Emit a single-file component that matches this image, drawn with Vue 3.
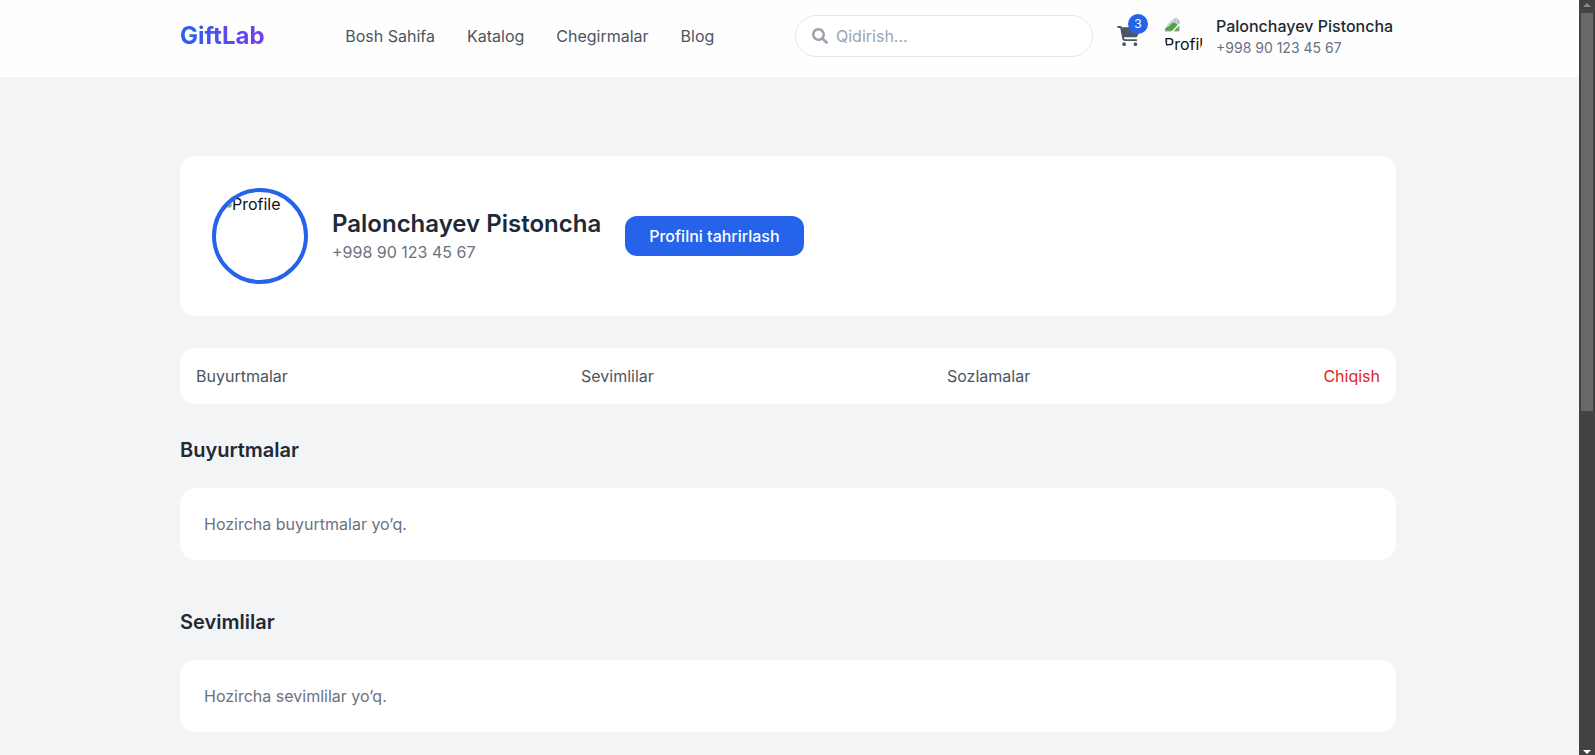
<script setup>
import { ref } from 'vue'

const query = ref('')
const user = { name: 'Palonchayev Pistoncha', phone: '+998 90 123 45 67' }
const menu = ['Bosh Sahifa', 'Katalog', 'Chegirmalar', 'Blog']
const tabs = ['Buyurtmalar', 'Sevimlilar', 'Sozlamalar']
const sections = [
  { title: 'Buyurtmalar', empty: 'Hozircha buyurtmalar yo’q.' },
  { title: 'Sevimlilar', empty: 'Hozircha sevimlilar yo’q.' },
]
</script>

<template>
  <div class="shell">
    <div class="page">
      <header class="header">
        <div class="container bar">
          <a class="logo" href="#">GiftLab</a>
          <nav class="menu">
            <a v-for="item in menu" :key="item" href="#">{{ item }}</a>
          </nav>
          <div class="tools">
            <label class="search">
              <svg class="search-icon" viewBox="0 0 512 512" aria-hidden="true">
                <path d="M505 442.7L405.3 343c-4.500-4.500-10.600-7-17-7H372c27.600-35.300 44-79.700 44-128C416 93.100 322.900 0 208 0S0 93.100 0 208s93.100 208 208 208c48.300 0 92.700-16.400 128-44v16.300c0 6.400 2.500 12.500 7 17l99.700 99.700c9.400 9.400 24.600 9.400 33.900 0l28.300-28.300c9.400-9.400 9.400-24.600.1-34zM208 336c-70.700 0-128-57.200-128-128 0-70.700 57.200-128 128-128 70.700 0 128 57.200 128 128 0 70.700-57.200 128-128 128z" />
              </svg>
              <input v-model="query" type="text" placeholder="Qidirish..." aria-label="Qidirish" />
            </label>
            <a class="cart" href="#" aria-label="Savat">
              <svg viewBox="0 0 576 512" aria-hidden="true">
                <path d="M0 24C0 10.7 10.7 0 24 0H69.5c22 0 41.5 12.8 50.6 32h411c26.3 0 45.5 25 38.6 50.4l-41 152.3c-8.5 31.4-37 53.3-69.5 53.3H170.7l5.4 28.5c2.2 11.3 12.1 19.5 23.600 19.500H488c13.3 0 24 10.7 24 24s-10.7 24-24 24H199.700c-34.600 0-64.300-24.600-70.700-58.500L77.400 54.500c-.7-3.800-4-6.500-7.900-6.500H24C10.700 48 0 37.300 0 24zM128 464a48 48 0 1 1 96 0 48 48 0 1 1 -96 0zm336-48a48 48 0 1 1 0 96 48 48 0 1 1 0-96z" />
              </svg>
              <span class="badge">3</span>
            </a>
            <a class="account" href="#">
              <span class="thumb">
                <svg class="missing" viewBox="0 0 16 16" aria-hidden="true">
                  <path d="M1 1h10l4 4v10H1z" fill="#c3d4f5" />
                  <path d="M1 15v-3q4-1 6-4t6 0v2l-5 5z" fill="#50a936" />
                  <path d="M8 15l7-7v2l-5 5z" fill="#fff" />
                  <path d="M10 15l5-5v5z" fill="#50a936" />
                  <path d="M11 1v4h4z" fill="#fff" />
                  <path d="M1 15V1h10l4 4v3M11 1v4h4M1 15h6M10 15h5v-5" fill="none" stroke="#a3a3a3" />
                </svg>
                <span>Profile</span>
              </span>
              <span class="who">
                <span class="who-name">{{ user.name }}</span>
                <span class="who-phone">{{ user.phone }}</span>
              </span>
            </a>
          </div>
        </div>
      </header>

      <main class="container content">
        <section class="card profile">
          <div class="avatar">
            <svg class="missing" viewBox="0 0 16 16" aria-hidden="true">
              <path d="M1 1h10l4 4v10H1z" fill="#c3d4f5" />
              <path d="M1 15v-3q5-5 9-2l5 1v4z" fill="#50a936" />
              <path d="M1 1h10l4 4v10H1z" fill="none" stroke="#9a9a9a" />
            </svg>
            <span>Profile</span>
          </div>
          <div>
            <h1>{{ user.name }}</h1>
            <p class="phone">{{ user.phone }}</p>
          </div>
          <button class="edit" type="button">Profilni tahrirlash</button>
        </section>

        <nav class="card tabs">
          <a v-for="tab in tabs" :key="tab" href="#">{{ tab }}</a>
          <a class="logout" href="#">Chiqish</a>
        </nav>

        <section v-for="s in sections" :key="s.title" class="block">
          <h2>{{ s.title }}</h2>
          <div class="card empty"><p>{{ s.empty }}</p></div>
        </section>
      </main>
    </div>

    <div class="scrollbar" aria-hidden="true">
      <svg viewBox="0 0 8 4"><path d="M4 0l4 4H0z" fill="#8a8a8a" /></svg>
      <div class="track"><div class="grip"></div></div>
      <svg viewBox="0 0 8 4"><path d="M0 0h8L4 4z" fill="#fff" /></svg>
    </div>
  </div>
</template>

<style>
body {
  margin: 0;
  background: #f3f4f6;
}
</style>

<style scoped>
* {
  box-sizing: border-box;
}
.shell {
  display: grid;
  grid-template-columns: minmax(0, 1fr) 16px;
  height: 100vh;
  font-family: Inter, "Liberation Sans", sans-serif;
  font-size: 16px;
  line-height: 24px;
  color: #4b5563;
}
.page {
  overflow: hidden;
  background: #f3f4f6;
}
a {
  color: inherit;
  text-decoration: none;
}
h1,
h2,
p {
  margin: 0;
}
.header {
  padding: 14px 3px 19px 0;
  background: #fefefe;
}
.container {
  max-width: 1280px;
  margin: 0 auto;
  padding: 0 32px;
}
.bar {
  display: flex;
  align-items: center;
  justify-content: space-between;
}
.logo {
  font-size: 24px;
  font-weight: 700;
  line-height: 32px;
  color: transparent;
  background: linear-gradient(to right, #2563eb, #7c3aed);
  background-clip: text;
  -webkit-background-clip: text;
}
.menu {
  display: flex;
  gap: 32px;
}
.tools {
  display: flex;
  align-items: center;
  gap: 24px;
}
.search {
  display: flex;
  align-items: center;
  gap: 8px;
  width: 298px;
  height: 42px;
  padding: 0 16px;
  border: 1px solid #e5e7eb;
  border-radius: 21px;
  background: #fff;
}
.search-icon {
  flex: none;
  width: 16px;
  height: 16px;
  fill: #9ca3af;
}
.search input {
  flex: 1;
  min-width: 0;
  padding: 0;
  border: 0;
  outline: 0;
  background: transparent;
  font: inherit;
  color: #1f2937;
}
.search input::placeholder {
  color: #9ca3af;
  opacity: 1;
}
.cart {
  position: relative;
  display: flex;
}
.cart svg {
  width: 23px;
  height: 20px;
  fill: #4b5563;
}
.badge {
  position: absolute;
  top: -12px;
  right: -8px;
  width: 20px;
  height: 20px;
  border-radius: 50%;
  background: #2563eb;
  color: #fff;
  font-size: 12px;
  line-height: 20px;
  text-align: center;
}
.account {
  display: flex;
  align-items: center;
  gap: 12px;
}
.thumb {
  display: flex;
  flex-direction: column;
  width: 40px;
  height: 40px;
  border-radius: 50%;
  overflow: hidden;
  color: #111;
}
.missing {
  flex: none;
  width: 16px;
  height: 16px;
}
.who {
  display: flex;
  flex-direction: column;
  min-width: 180px;
}
.who-name {
  font-weight: 500;
  color: #1f2937;
}
.who-phone {
  font-size: 14px;
  line-height: 20px;
  color: #6b7280;
}
.content {
  margin-top: 79px;
}
.page > .content {
  padding-right: 35px;
  max-width: 1283px;
}
.card {
  border-radius: 16px;
  background: #fff;
}
.profile {
  display: flex;
  align-items: center;
  gap: 24px;
  padding: 32px;
}
.avatar {
  display: flex;
  width: 96px;
  height: 96px;
  border: 4px solid #2563eb;
  border-radius: 50%;
  overflow: hidden;
  color: #111;
}
h1 {
  font-size: 24px;
  font-weight: 600;
  line-height: 32px;
  color: #1f2937;
}
.phone,
.empty {
  color: #6b7280;
}
.edit {
  padding: 8px 24px;
  border: 0;
  border-radius: 12px;
  background: #2563eb;
  color: #fff;
  font: inherit;
  font-weight: 500;
}
.tabs {
  display: flex;
  justify-content: space-between;
  margin-top: 32px;
  padding: 16px;
}
.logout {
  color: #dc2626;
}
.block {
  margin-top: 32px;
}
.block + .block {
  margin-top: 48px;
}
h2 {
  margin-bottom: 24px;
  font-size: 20px;
  font-weight: 600;
  line-height: 28px;
  color: #1f2937;
}
.empty {
  padding: 24px;
}
.scrollbar {
  display: flex;
  flex-direction: column;
  align-items: center;
  padding: 3px 0 1px;
  background: #424242;
}
.scrollbar svg {
  width: 8px;
  height: 4px;
}
.track {
  flex: 1;
  width: 12px;
  padding-top: 6px;
}
.grip {
  height: 54%;
  background: #686868;
}
</style>
